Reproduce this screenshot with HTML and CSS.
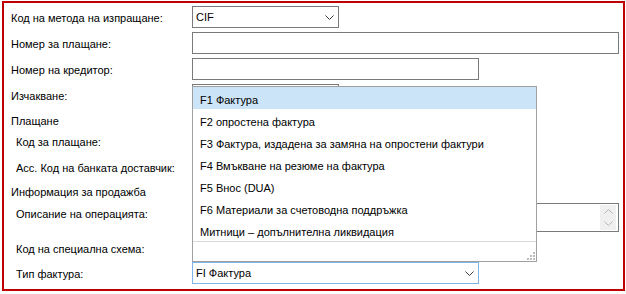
FILE: index.html
```html
<!DOCTYPE html>
<html lang="bg">
<head>
<meta charset="utf-8">
<title>Form</title>
<link rel="stylesheet" href="styles.css">
</head>
<body>
<div class="frame">
  <div class="row r1">
    <span class="lbl">Код на метода на изпращане:</span>
    <div class="combo w-short"><span class="val">CIF</span><svg class="chev" width="9" height="5" viewBox="0 0 9 5"><path d="M0.5 0.5 L4.5 4.5 L8.5 0.5"/></svg></div>
  </div>
  <div class="row r2">
    <span class="lbl">Номер за плащане:</span>
    <div class="field w-long"></div>
  </div>
  <div class="row r3">
    <span class="lbl">Номер на кредитор:</span>
    <div class="field w-mid"></div>
  </div>
  <div class="row r4">
    <span class="lbl">Изчакване:</span>
    <div class="cell">
      <div class="combo w-short"></div>
      <div class="dropdown">
        <ul class="items">
          <li class="item sel">F1 Фактура</li>
          <li class="item">F2 опростена фактура</li>
          <li class="item">F3 Фактура, издадена за замяна на опростени фактури</li>
          <li class="item">F4 Вмъкване на резюме на фактура</li>
          <li class="item">F5 Внос (DUA)</li>
          <li class="item">F6 Материали за счетоводна поддръжка</li>
          <li class="item">Митници – допълнителна ликвидация</li>
        </ul>
        <div class="foot">
          <svg class="grip" width="9" height="9" viewBox="0 0 9 9"><rect x="7" y="1" width="2" height="2"/><rect x="4" y="4" width="2" height="2"/><rect x="7" y="4" width="2" height="2"/><rect x="1" y="7" width="2" height="2"/><rect x="4" y="7" width="2" height="2"/><rect x="7" y="7" width="2" height="2"/></svg>
        </div>
      </div>
    </div>
  </div>
  <div class="row text r5"><span class="lbl">Плащане</span></div>
  <div class="row text r6"><span class="lbl sub">Код за плащане:</span></div>
  <div class="row text r7"><span class="lbl sub">Асс. Код на банката доставчик:</span></div>
  <div class="row text r8"><span class="lbl">Информация за продажба</span></div>
  <div class="row r9">
    <span class="lbl sub">Описание на операцията:</span>
    <div class="memo w-long">
      <div class="vscroll">
        <div class="sbtn"><svg width="9" height="5" viewBox="0 0 9 5"><path d="M0.5 4.5 L4.5 0.5 L8.5 4.5"/></svg></div>
        <div class="sbtn"><svg width="9" height="5" viewBox="0 0 9 5"><path d="M0.5 0.5 L4.5 4.5 L8.5 0.5"/></svg></div>
      </div>
    </div>
  </div>
  <div class="row text r10"><span class="lbl sub">Код на специална схема:</span></div>
  <div class="row r11">
    <span class="lbl sub">Тип фактура:</span>
    <div class="combo w-mid focus"><span class="val">FI Фактура</span><svg class="chev" width="9" height="5" viewBox="0 0 9 5"><path d="M0.5 0.5 L4.5 4.5 L8.5 0.5"/></svg></div>
  </div>
</div>
</body>
</html>
```
FILE: styles.css
```css
* { box-sizing: border-box; }

body {
  margin: 0;
  background: #fff;
  font-family: "Liberation Sans", Arial, sans-serif;
  font-size: 11px;
  color: #000;
}

.frame {
  margin: 1px 0 0 2px;
  width: 623px;
  height: 290px;
  border: 2px solid #c00000;
  padding-top: 3px;
  display: flex;
  flex-direction: column;
}

.row {
  flex: none;
  display: grid;
  grid-template-columns: 188px auto;
  align-items: center;
  height: 22px;
}

.r2, .r3, .r4 { margin-top: 4px; }
.text { height: 20px; }
.r5 { margin-top: 4px; }
.r6 { margin-top: 1px; }
.r7 { margin-top: 6px; }
.r8 { margin-top: 4px; }
.r9 { margin-top: 2px; height: 29px; align-items: start; }
.r10 { margin-top: 6px; }
.r11 { margin-top: 4px; }

.lbl {
  padding-left: 7px;
  padding-top: 2px;
  white-space: nowrap;
}
.lbl.sub { padding-left: 12px; }
.r9 .lbl { padding-top: 5px; }

.w-short { width: 147px; }
.w-mid { width: 287px; }
.w-long { width: 427px; }

.field, .combo, .memo {
  height: 22px;
  border: 1px solid #7a7a7a;
  background: #fff;
}

.combo {
  display: flex;
  align-items: center;
  padding-left: 3px;
}
.combo.focus { border-color: #7eb4ea; }
.chev {
  margin-left: auto;
  margin-right: 4px;
}
.chev path {
  fill: none;
  stroke: #3c3c3c;
  stroke-width: 1;
}

.cell { position: relative; height: 22px; }

.dropdown {
  position: absolute;
  left: 0;
  top: 2px;
  z-index: 5;
  width: 345px;
  background: #fff;
  border: 1px solid #a0a0a0;
}

.items {
  list-style: none;
  margin: 0;
  padding: 0;
}
.item {
  height: 22px;
  padding: 4px 0 0 7px;
  line-height: 18px;
  white-space: nowrap;
}
.item.sel { background: #cce4f7; }

.foot {
  height: 20px;
  border-top: 1px solid #dadada;
  display: flex;
  justify-content: flex-end;
  align-items: flex-end;
  padding: 0 1px 1px 0;
}
.grip rect { fill: #bdbdbd; }

.memo {
  height: 29px;
  display: flex;
  justify-content: flex-end;
}
.vscroll {
  width: 16px;
  margin: 1px 2px 1px 0;
  background: #f0f0f0;
  display: flex;
  flex-direction: column;
}
.sbtn {
  flex: 1;
  display: flex;
  align-items: center;
  justify-content: center;
}
.sbtn path {
  fill: none;
  stroke: #b4b4b4;
  stroke-width: 1;
}
```
